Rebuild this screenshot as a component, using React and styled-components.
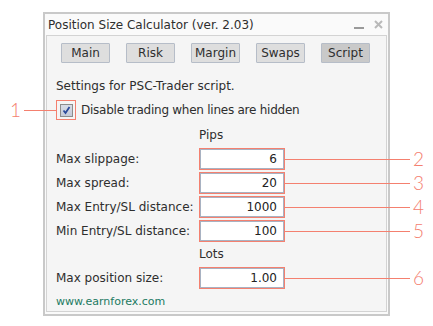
import React from "react";
import styled, { createGlobalStyle } from "styled-components";

const Global = createGlobalStyle`
  html, body { margin: 0; padding: 0; background: #ffffff; }
  body { font-family: "DejaVu Sans", "Liberation Sans", sans-serif; }
`;

const SALMON = "#f4806f";

const Stage = styled.div`
  width: 433px;
  height: 326px;
  box-sizing: border-box;
  padding: 12px 0 0 43px;
  overflow: hidden;
`;

const Window = styled.div`
  width: 347px;
  height: 304px;
  box-sizing: border-box;
  border: 2px solid #c9c9c9;
  background: #fafafa;
  padding: 0 1px 2px 1px;
  display: flex;
  flex-direction: column;
`;

const TitleBar = styled.div`
  height: 21px;
  display: flex;
  align-items: center;
  padding: 0 4px 0 2px;
  font-size: 12px;
  color: #2e2e2e;
`;

const TitleText = styled.div`
  flex: 1;
  padding-top: 1px;
`;

const TitleButtons = styled.div`
  display: flex;
  align-items: center;
  gap: 10px;
`;

const Panel = styled.div`
  flex: 1;
  border: 1px solid #d3d3d3;
  background: #f5f5f5;
  padding: 0 0 0 9px;
  display: flex;
  flex-direction: column;
  font-size: 12px;
  color: #2e2e2e;
`;

const Tabs = styled.div`
  display: flex;
  gap: 16px;
  margin: 7px 0 0 5px;
`;

const Tab = styled.div`
  width: 49px;
  height: 20px;
  box-sizing: border-box;
  border: 1px solid #b6bdc8;
  border-radius: 1px;
  background: ${(p) => (p.$active ? "#c9c9c9" : "#dedede")};
  display: flex;
  align-items: center;
  justify-content: center;
  font-size: 12px;
  color: #2e2e2e;
`;

const Line = styled.div`
  height: ${(p) => p.$h || 16}px;
  margin-top: ${(p) => p.$mt || 0}px;
  display: flex;
  align-items: center;
`;

const Heading = styled(Line)`
  padding-left: 143px;
`;

const Highlight = styled.div`
  position: relative;
  box-sizing: border-box;
  border: 1px solid ${SALMON};
`;

const CheckFrame = styled(Highlight)`
  width: 20px;
  height: 20px;
  display: flex;
  align-items: center;
  justify-content: center;
`;

const CheckBox = styled.div`
  width: 13px;
  height: 13px;
  box-sizing: border-box;
  border: 1px solid #8c8c8c;
  background: linear-gradient(#d8dce6, #c4cad8);
  display: flex;
  align-items: center;
  justify-content: center;
`;

const CheckLabel = styled.span`
  margin-left: 5px;
  letter-spacing: -0.25px;
`;

const Label = styled.div`
  width: 143px;
`;

const FieldFrame = styled(Highlight)`
  width: 86px;
  height: 22px;
`;

const Input = styled.div`
  height: 100%;
  box-sizing: border-box;
  border: 1px solid #a8b2c2;
  background: #ffffff;
  display: flex;
  align-items: center;
  justify-content: flex-end;
  padding-right: 6px;
  color: #222;
`;

const CalloutRight = styled.div`
  position: absolute;
  left: 100%;
  top: 50%;
  width: 140px;
  height: 20px;
  margin-top: -10px;
  display: flex;
  align-items: center;
`;

const CalloutLeft = styled.div`
  position: absolute;
  right: 100%;
  top: 50%;
  width: 47px;
  height: 20px;
  margin-top: -10px;
  display: flex;
  align-items: center;
`;

const Lead = styled.div`
  flex: 1;
  height: 1px;
  background: ${SALMON};
`;

const Num = styled.div`
  font-family: Lato, "Liberation Sans", sans-serif;
  font-weight: 300;
  font-size: 19px;
  line-height: 20px;
  color: ${SALMON};
  margin: ${(p) => (p.$left ? "0 3px 0 0" : "0 0 0 3px")};
`;

const Site = styled(Line)`
  color: #1b7a62;
  font-size: 11px;
`;

const fields = [
  { label: "Max slippage:", value: "6", n: 2 },
  { label: "Max spread:", value: "20", n: 3 },
  { label: "Max Entry/SL distance:", value: "1000", n: 4 },
  { label: "Min Entry/SL distance:", value: "100", n: 5 },
];

function Field({ label, value, n, mt }) {
  return (
    <Line $h={22} $mt={mt}>
      <Label>{label}</Label>
      <FieldFrame>
        <Input>{value}</Input>
        <CalloutRight>
          <Lead />
          <Num>{n}</Num>
        </CalloutRight>
      </FieldFrame>
    </Line>
  );
}

export default function App() {
  const tabs = ["Main", "Risk", "Margin", "Swaps", "Script"];
  return (
    <Stage>
      <Global />
      <Window>
        <TitleBar>
          <TitleText>Position Size Calculator (ver. 2.03)</TitleText>
          <TitleButtons>
            <svg width="10" height="10" viewBox="0 0 10 10">
              <rect x="0" y="7" width="10" height="2" fill="#9a9a9a" />
            </svg>
            <svg width="9" height="9" viewBox="0 0 9 9">
              <path d="M1 1 L8 8 M8 1 L1 8" stroke="#b9b9b9" strokeWidth="2" />
            </svg>
          </TitleButtons>
        </TitleBar>
        <Panel>
          <Tabs>
            {tabs.map((t) => (
              <Tab key={t} $active={t === "Script"}>
                {t}
              </Tab>
            ))}
          </Tabs>
          <Line $mt={15}>Settings for PSC-Trader script.</Line>
          <Line $h={20} $mt={6}>
            <CheckFrame>
              <CheckBox>
                <svg width="9" height="9" viewBox="0 0 9 9">
                  <path d="M1.5 4.5 L3.5 7 L7.5 1" stroke="#2b4a9a" strokeWidth="1.8" fill="none" />
                </svg>
              </CheckBox>
              <CalloutLeft>
                <Num $left>1</Num>
                <Lead />
              </CalloutLeft>
            </CheckFrame>
            <CheckLabel>Disable trading when lines are hidden</CheckLabel>
          </Line>
          <Heading $mt={7}>Pips</Heading>
          {fields.map((f, i) => (
            <Field key={f.n} {...f} mt={i === 0 ? 5 : 2} />
          ))}
          <Heading $mt={4}>Lots</Heading>
          <Field label="Max position size:" value="1.00" n={6} mt={5} />
          <Site $mt={4}>www.earnforex.com</Site>
        </Panel>
      </Window>
    </Stage>
  );
}
